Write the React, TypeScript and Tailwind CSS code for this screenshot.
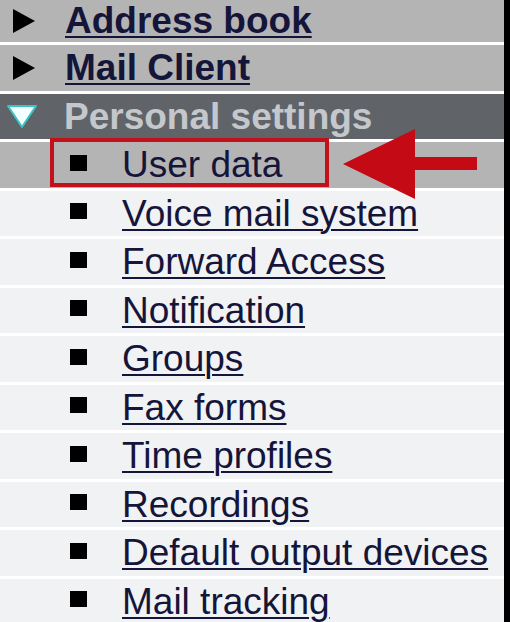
import React from 'react';

const subItems = [
  'Voice mail system',
  'Forward Access',
  'Notification',
  'Groups',
  'Fax forms',
  'Time profiles',
  'Recordings',
  'Default output devices',
  'Mail tracking',
];

function RightTriangle() {
  return (
    <svg width="24" height="26" viewBox="0 0 24 26" className="shrink-0">
      <polygon points="1,1 23,13 1,25" fill="#000" />
    </svg>
  );
}

function DownTriangle() {
  return (
    <svg width="32" height="25" viewBox="0 0 32 25" className="shrink-0">
      <polygon points="2,2 30,2 16,23" fill="#f4ffff" stroke="#3cc4c4" strokeWidth="2" strokeLinejoin="round" />
    </svg>
  );
}

function Bullet() {
  return <span className="block w-[17px] h-[16px] bg-black shrink-0 -mt-[4px]" />;
}

function SubRow({ label }: { label: string }) {
  return (
    <div className="flex items-center h-[48.5px] border-b-[3px] border-white bg-[#f0f2f4] pl-[70px] gap-[35px]">
      <Bullet />
      <a className="underline decoration-2 underline-offset-[3px] text-[#15153a]">{label}</a>
    </div>
  );
}

export default function App() {
  return (
    <div
      className="w-[510px] h-[622px] overflow-hidden bg-[#f0f2f4] border-r-[6px] border-black"
      style={{ fontFamily: '"Liberation Sans", Arial, sans-serif' }}
    >
      <div className="flex flex-col text-[37px]">
        <div className="flex items-center h-[45px] border-b-[3px] border-white bg-[#b4b4b4] pl-[12px] gap-[29px]">
          <RightTriangle />
          <a className="font-bold underline decoration-2 underline-offset-[3px] text-[#15153a]">Address book</a>
        </div>
        <div className="flex items-center h-[48.5px] border-b-[3px] border-white bg-[#b4b4b4] pl-[12px] gap-[29px]">
          <RightTriangle />
          <a className="font-bold underline decoration-2 underline-offset-[3px] text-[#15153a]">Mail Client</a>
        </div>
        <div className="flex items-center h-[48.5px] border-b-[3px] border-white bg-[#606468] pl-[6px] gap-[26px]">
          <DownTriangle />
          <span className="font-bold text-[#c4c8cc]">Personal settings</span>
        </div>
        <div className="relative flex items-center h-[48.5px] border-b-[3px] border-white bg-[#b4b4b4] pl-[70px] gap-[35px]">
          <Bullet />
          <span className="text-[#15153a]">User data</span>
          <div className="absolute left-[50px] top-[-4px] w-[279px] h-[49px] border-[4px] border-[#c4101a]" />
          <svg
            className="absolute left-[340px] top-[-16px]"
            width="142"
            height="75"
            viewBox="0 0 142 75"
          >
            <polygon points="3,38 75,3 75,31 137,31 137,44 75,44 75,73" fill="#c40a14" />
          </svg>
        </div>
        {subItems.map((s) => (
          <SubRow key={s} label={s} />
        ))}
      </div>
    </div>
  );
}
